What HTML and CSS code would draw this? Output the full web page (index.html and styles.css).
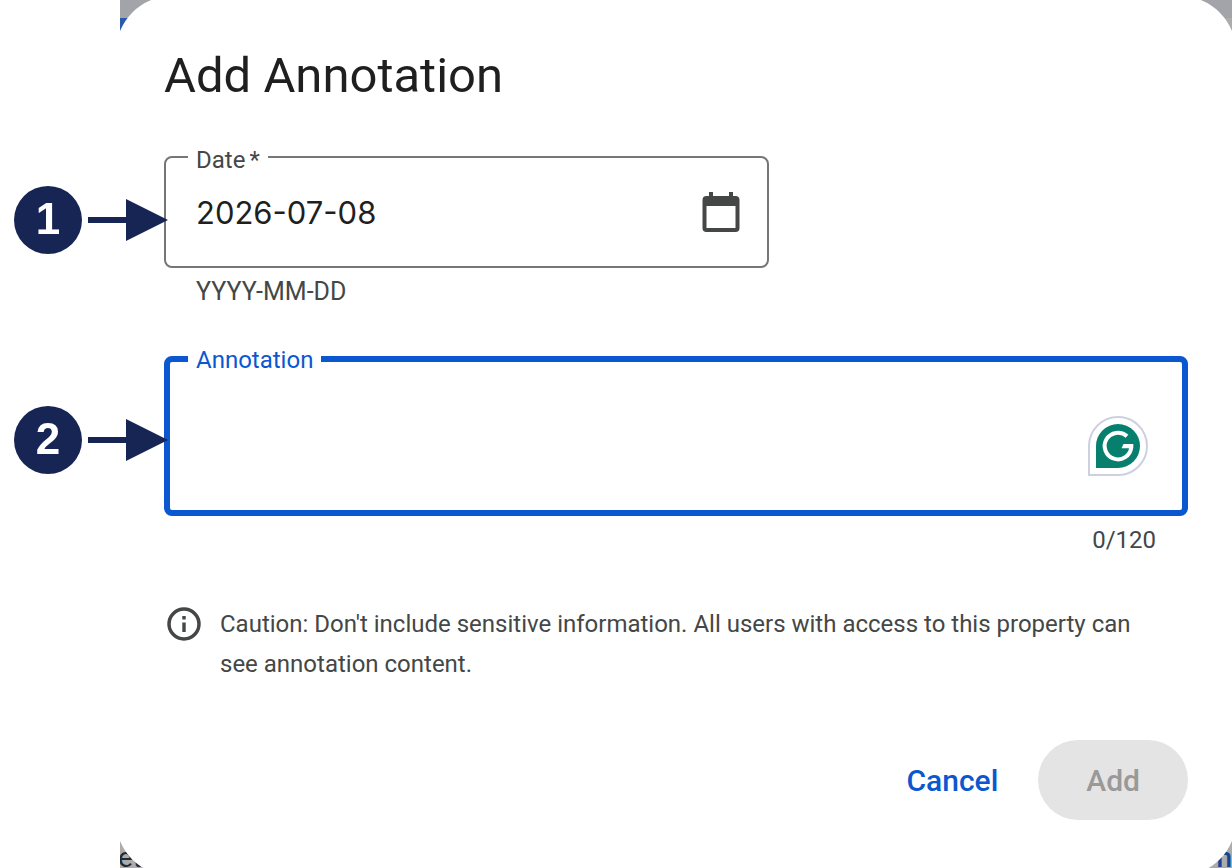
FILE: index.html
```html
<!DOCTYPE html>
<html lang="en">
  <head>
    <meta charset="UTF-8" />
    <meta name="viewport" content="width=device-width, initial-scale=1.0" />
    <title>Add Annotation</title>
    <link rel="stylesheet" href="styles.css">
  </head>
  <body>
    <div class="page">
      <div class="backdrop" aria-hidden="true">
        <div class="backdrop-bar"></div>
        <div class="backdrop-tab"></div>
        <div class="backdrop-text">
          <span>et</span>
          <span class="backdrop-link">n</span>
        </div>
      </div>

      <form class="dialog" role="dialog" aria-labelledby="dialog-title">
        <h1 class="title" id="dialog-title">Add Annotation</h1>

        <div class="field date-field">
          <div class="outline">
            <label class="label" for="date">Date<span class="required">*</span></label>
            <input class="date-input" type="text" id="date" value="2026-07-08" />
            <button class="icon-btn" type="button" aria-label="Open calendar">
              <svg width="48" height="48" viewBox="0 0 48 48">
                <path fill="#444746" fill-rule="evenodd" d="M12 4h4v4h16V4h4v4h2.500a4 4 0 0 1 4 4v28a4 4 0 0 1-4 4h-29a4 4 0 0 1-4-4V12a4 4 0 0 1 4-4H12zM9.500 18v22h29V18z" />
              </svg>
            </button>
          </div>
          <p class="hint">YYYY-MM-DD</p>
          <div class="callout">
            <span class="badge">1</span>
            <svg width="80" height="42" viewBox="0 0 80 42">
              <path fill="#172554" d="M0 18h38V0l42 21-42 21V24H0z" />
            </svg>
          </div>
        </div>

        <div class="field note-field">
          <div class="outline active">
            <label class="label" for="note">Annotation</label>
            <textarea class="note-input" id="note" maxlength="120"></textarea>
            <div class="grammar">
              <svg width="44" height="44" viewBox="0 0 44 44">
                <path fill="#067f6f" d="M0 44V22a22 22 0 1 1 22 22z" />
                <path fill="none" stroke="#fff" stroke-width="4" d="M31 12.300a13.300 13.300 0 1 0 4.200 11" />
                <path fill="#fff" d="M27.500 20H37.300q.2 3.200-.5 5.500l-3.900-1.200H25.500z" />
              </svg>
            </div>
          </div>
          <p class="hint counter">0/120</p>
          <div class="callout">
            <span class="badge">2</span>
            <svg width="80" height="42" viewBox="0 0 80 42">
              <path fill="#172554" d="M0 18h38V0l42 21-42 21V24H0z" />
            </svg>
          </div>
        </div>

        <div class="caution">
          <svg width="40" height="40" viewBox="0 0 40 40">
            <circle cx="20" cy="20" r="15" fill="none" stroke="#444746" stroke-width="3.500" />
            <path fill="#444746" d="M18.300 18.500h3.400V28h-3.400zM18.300 12h3.400v3.400h-3.400z" />
          </svg>
          <p>Caution: Don't include sensitive information. All users with access to this property can see annotation content.</p>
        </div>

        <div class="actions">
          <button class="btn cancel" type="button">Cancel</button>
          <button class="btn add" type="submit" disabled>Add</button>
        </div>
      </form>
    </div>
  </body>
</html>
```

FILE: styles.css
```css
* {
  margin: 0;
  padding: 0;
  box-sizing: border-box;
}
body {
  background: #fff;
  color: #444746;
  font-family: Roboto, "Open Sans", sans-serif;
  font-size: 24px;
  line-height: 32px;
  height: 100vh;
  overflow: hidden;
}

.page {
  position: relative;
  padding-left: 120px;
}

/* dimmed page behind the dialog */
.backdrop {
  position: fixed;
  top: 0;
  right: 0;
  bottom: 0;
  left: 120px;
  display: flex;
  flex-direction: column;
  overflow: hidden;
  background: #acacac;
}
.backdrop-bar {
  height: 18px;
  background: #a3a4a9;
}
.backdrop-tab {
  width: 40px;
  height: 40px;
  background: #2a5aab;
}
.backdrop-text {
  display: flex;
  justify-content: space-between;
  margin-top: auto;
  margin-left: -2px;
  font-size: 28px;
  line-height: 20px;
  color: #222b33;
}
.backdrop-link {
  font-weight: 500;
  color: #174296;
}

.dialog {
  position: relative;
  margin: -4px -4px 0;
  padding: 48px 48px 56px;
  border-radius: 56px;
  background: #fff;
}

.title {
  margin-bottom: 48px;
  font-size: 49px;
  font-weight: 400;
  line-height: 64px;
  color: #1f1f1f;
}

/* fields */
.field {
  position: relative;
  margin-bottom: 48px;
}
.date-field {
  max-width: 605px;
}
.outline {
  position: relative;
  display: flex;
  align-items: center;
  border: 2px solid #747775;
  border-radius: 8px;
}
.date-field .outline {
  height: 112px;
  padding: 0 22px 0 30px;
}
.note-field .outline {
  height: 160px;
}
.outline.active {
  border: 6px solid #0b57d0;
}
.label {
  position: absolute;
  top: -14px;
  left: 22px;
  padding: 0 8px;
  background: #fff;
}
.active .label {
  top: -18px;
  left: 18px;
  color: #0b57d0;
}
.required {
  margin-left: 4px;
}
.date-input,
.note-input {
  flex: 1;
  min-width: 0;
  border: none;
  outline: none;
  background: transparent;
  color: #1f1f1f;
  font-family: Inter, Roboto, sans-serif;
  font-size: 31px;
}
.note-input {
  align-self: stretch;
  padding: 32px 26px;
  resize: none;
}
.icon-btn {
  width: 48px;
  height: 48px;
  border: none;
  background: none;
  cursor: pointer;
}
.icon-btn svg {
  display: block;
}
.hint {
  margin-top: 8px;
  padding: 0 32px;
}
.date-field .hint {
  font-size: 25px;
}
.counter {
  text-align: right;
}

.grammar {
  position: absolute;
  right: 34px;
  bottom: 34px;
  padding: 6px;
  border: 2px solid #cdd0df;
  border-radius: 50% 50% 50% 0;
  background: #fff;
}
.grammar svg {
  display: block;
}

/* numbered pointers on the left of each field */
.callout {
  position: absolute;
  top: 30px;
  left: -150px;
  display: flex;
  align-items: center;
  gap: 6px;
}
.note-field .callout {
  top: 50px;
}
.badge {
  width: 68px;
  height: 68px;
  border-radius: 50%;
  background: #172554;
  color: #fff;
  font-family: "Liberation Sans", Arial, sans-serif;
  font-size: 44px;
  font-weight: bold;
  line-height: 66px;
  text-align: center;
}

.caution {
  display: flex;
  gap: 16px;
  padding-right: 32px;
  line-height: 40px;
}
.caution svg {
  flex: none;
}

.actions {
  display: flex;
  justify-content: flex-end;
  gap: 16px;
  margin-top: 56px;
}
.btn {
  height: 80px;
  border: none;
  border-radius: 40px;
  background: none;
  font-family: inherit;
  font-size: 30px;
  font-weight: 500;
}
.cancel {
  padding: 0 24px;
  color: #0b57d0;
  cursor: pointer;
}
.add {
  padding: 0 48px;
  background: #e4e4e4;
  color: #999;
}
```
